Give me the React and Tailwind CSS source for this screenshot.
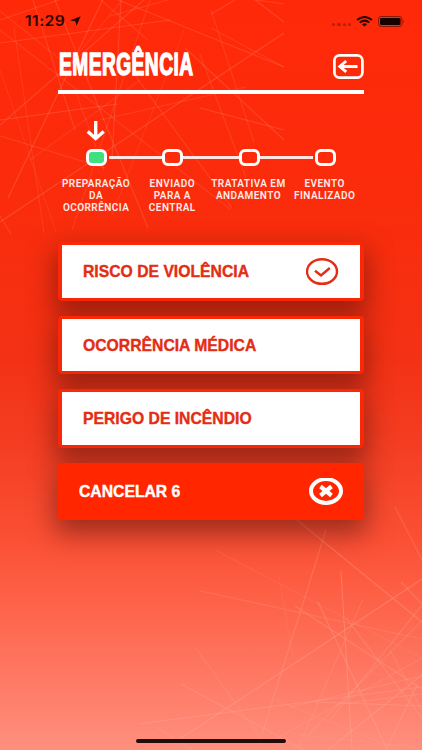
const steps = [
  { lines: ['PREPARAÇÃO', 'DA', 'OCORRÊNCIA'], active: true },
  { lines: ['ENVIADO', 'PARA A', 'CENTRAL'] },
  { lines: ['TRATATIVA EM', 'ANDAMENTO'] },
  { lines: ['EVENTO', 'FINALIZADO'] },
];

const options = [
  { label: 'RISCO DE VIOLÊNCIA', selected: true },
  { label: 'OCORRÊNCIA MÉDICA' },
  { label: 'PERIGO DE INCÊNDIO' },
];

// x1, y1, x2, y2, opacity
const scratches = [
  [0, 43, 170, 20, 0.2], [0, 125, 160, -14, 0.2], [0, 11, 66, 64, 0.13],
  [33, 0, 75, 130, 0.18], [55, 0, 148, 228, 0.2], [121, 0, 112, 160, 0.2],
  [105, -5, 8, 198, 0.22], [0, 120, 118, 104, 0.22], [0, 136, 105, 168, 0.18],
  [0, 222, 284, 33, 0.22], [96, -4, 148, 40, 0.15], [118, 0, 284, 67, 0.18],
  [211, 10, 254, 142, 0.15], [211, 14, 235, 0, 0.2], [250, -4, 284, 22, 0.2],
  [256, 0, 284, 4, 0.18], [100, 120, 246, 87, 0.16], [185, 48, 284, 140, 0.2],
  [200, 108, 284, 130, 0.2], [200, 54, 246, 178, 0.16], [120, 55, 232, 208, 0.18],
  [0, 30, 230, 209, 0.14], [14, 28, 44, 233, 0.13], [150, 0, 72, 230, 0.14],
  [0, 20, 88, -10, 0.18], [110, 16, 211, -12, 0.16], [75, 90, 104, 170, 0.13],
  [211, 28, 284, 67, 0.15], [60, 76, 122, 0, 0.13], [0, 216, 11, 234, 0.18],
  [0, 70, 56, 232, 0.1], [30, 160, 140, 80, 0.12], [184, 30, 112, 215, 0.1],
  [297, 520, 422, 622, 0.24], [326, 530, 262, 734, 0.2], [395, 507, 422, 560, 0.18],
  [341, 571, 352, 750, 0.26], [318, 602, 386, 747, 0.24], [295, 606, 422, 689, 0.22],
  [200, 591, 422, 639, 0.15], [215, 550, 422, 658, 0.1], [180, 739, 280, 673, 0.24],
  [280, 673, 422, 579, 0.24],
  [138, 724, 422, 687, 0.22], [181, 684, 304, 750, 0.22], [195, 647, 262, 740, 0.15],
  [346, 618, 422, 718, 0.22], [363, 599, 298, 748, 0.15], [422, 605, 330, 720, 0.2],
  [422, 621, 308, 735, 0.16], [422, 658, 270, 742, 0.15], [422, 675, 328, 750, 0.24],
  [417, 685, 386, 750, 0.24], [290, 707, 422, 676, 0.2], [315, 702, 422, 706, 0.24],
  [300, 735, 422, 748, 0.14], [275, 700, 400, 750, 0.12], [401, 582, 422, 604, 0.2],
  [340, 704, 422, 694, 0.22], [279, 577, 293, 658, 0.08], [390, 650, 422, 710, 0.16],
  [158, 728, 192, 750, 0.16],
];

function Background() {
  return (
    <svg className="absolute inset-0 -z-10" width="422" height="750" viewBox="0 0 422 750">
      {scratches.map(([x1, y1, x2, y2, opacity], i) => (
        <line key={i} x1={x1} y1={y1} x2={x2} y2={y2} stroke="#ffb09b" strokeOpacity={y1 > 400 ? opacity * 1.3 : opacity} strokeWidth="1.1" />
      ))}
    </svg>
  );
}

function StatusBar() {
  return (
    <div className="flex h-[42px] items-center justify-between pl-[25px] pr-[17px] text-[#2b0500]">
      <div className="flex items-center gap-[5px]">
        <span className="w-[40px] origin-left scale-x-[1.12] whitespace-nowrap font-['Inter',sans-serif] text-[14px] font-semibold leading-none tracking-[0.4px]">11:29</span>
        <svg width="11" height="10" viewBox="0 0 11 10" fill="currentColor">
          <path d="M10.7 0.2 6.5 9.7 5.4 5.2 0.1 4.4Z" />
        </svg>
      </div>
      <div className="flex items-center">
        <div className="mr-[5px] mt-[6px] flex gap-[2px]">
          {[0, 1, 2, 3].map((i) => (
            <span key={i} className="h-[3px] w-[3.2px] rounded-full bg-[#b81f09]" />
          ))}
        </div>
        <svg className="mr-[5px]" width="17" height="11" viewBox="0 0 17 11" fill="none" stroke="currentColor" strokeWidth="2">
          <path d="M1 4Q8.5-2 16 4" />
          <path d="M3.7 6.5Q8.5 2.8 13.3 6.5" />
          <path d="M6 8.2Q8.5 6.4 11 8.2L8.5 10.6Z" fill="currentColor" stroke="none" />
        </svg>
        <svg width="27" height="11" viewBox="0 0 27 11">
          <rect x="0.5" y="0.5" width="23.5" height="10" rx="2.6" fill="none" stroke="#8e1705" />
          <rect x="2" y="2" width="20.5" height="7" rx="1.2" fill="#180200" />
          <path d="M25.2 3.8Q26.8 5.5 25.2 7.2Z" fill="#8e1705" />
        </svg>
      </div>
    </div>
  );
}

function Header() {
  return (
    <header className="flex h-[52px] items-start justify-between border-b-4 border-white pt-[6px]">
      <h1 className="ml-[0.5px] w-[135px] origin-left scale-x-[0.617] whitespace-nowrap font-['Liberation_Sans_Narrow','Liberation_Sans',sans-serif] text-[31px] font-bold leading-[33px] tracking-[0.8px] text-white [-webkit-text-stroke:1.5px_white]">
        EMERGÊNCIA
      </h1>
      <button aria-label="Voltar" className="mt-[6px]">
        <svg width="31" height="25" viewBox="0 0 31 25" fill="none" stroke="#fff" strokeWidth="2.7">
          <rect x="1.4" y="1.4" width="28" height="22.2" rx="5" />
          <path d="M24.5 12.5H7M13.2 7 6.8 12.5l6.4 5.3" strokeWidth="2.9" />
        </svg>
      </button>
    </header>
  );
}

function Stepper() {
  return (
    <div className="-mx-[1px] mt-[26px] h-[122px]">
      <svg className="ml-[28px]" width="20" height="21" viewBox="0 0 20 21" fill="none" stroke="#fff" strokeWidth="3.4">
        <path d="M10.7 1V19M2.7 11.5l8 7 8-7" />
      </svg>
      <div className="mt-[8px] flex items-center pl-[29px]">
        {steps.map((step, i) => (
          <div key={i} className="flex items-center">
            {i > 0 && (
              <span className={`h-[2.5px] bg-[#ffe6e2] ${i === 1 ? 'ml-[2px] w-[53px]' : i === 3 ? 'mr-[2px] w-[53px]' : 'w-[55.5px]'}`} />
            )}
            <span className={`h-[17px] w-[21px] rounded-[6px] border-[3px] border-white ${step.active ? 'bg-[#42df80]' : ''}`} />
          </div>
        ))}
      </div>
      <div className="ml-[1px] mt-[12px] flex w-[306px]">
        {steps.map((step, i) => (
          <div key={i} className="flex w-[76.2px] shrink-0 flex-col items-center whitespace-nowrap font-['Roboto',sans-serif] text-[10px] font-semibold leading-[12px] tracking-[0.45px] text-[#ffebe7]">
            {step.lines.map((line) => (
              <span key={line}>{line}</span>
            ))}
          </div>
        ))}
      </div>
    </div>
  );
}

function CheckIcon() {
  return (
    <svg width="33" height="28" viewBox="0 0 33 28" fill="none" stroke="#e32d14">
      <ellipse cx="16" cy="13.5" rx="15" ry="12.3" strokeWidth="2.4" />
      <path d="M9 12.7 15 17.5 23.8 10" strokeWidth="2.4" />
    </svg>
  );
}

function CloseIcon() {
  return (
    <svg width="35" height="28" viewBox="0 0 35 28" fill="none" stroke="#fff">
      <ellipse cx="17" cy="13" rx="15" ry="11.9" strokeWidth="4" />
      <path d="M11.5 8.5 22.5 17.5M22.5 8.5 11.5 17.5" strokeWidth="4.2" />
    </svg>
  );
}

function OptionButton({ label, selected }) {
  return (
    <button className="flex h-[58.5px] w-full items-center justify-between rounded-[4px] border-x-4 border-y-[3px] border-[#fb2706] bg-white px-[21px] pt-[1px] shadow-[0_11px_26px_3px_rgba(70,15,10,0.5)]">
      <span className="origin-left scale-x-[0.925] whitespace-nowrap text-[17px] font-bold text-[#e32d14] [-webkit-text-stroke:0.4px_#e32d14]">{label}</span>
      {selected && <CheckIcon />}
    </button>
  );
}

export default function App() {
  return (
    <main className="relative isolate flex h-[750px] w-[422px] flex-col overflow-hidden bg-[linear-gradient(#ff2908_0%,#fa2c0c_28%,#f33215_48%,#f33c21_58%,#fb5034_72%,#fd5d42_78%,#ff8f7e_100%)] font-['Liberation_Sans',Arial,sans-serif]">
      <Background />
      <StatusBar />
      <div className="w-[306px] self-center">
        <Header />
        <Stepper />
        <div className="flex flex-col gap-[15px]">
          {options.map((option) => (
            <OptionButton key={option.label} {...option} />
          ))}
          <button className="flex h-[57px] w-full items-center justify-between rounded-[4px] bg-[#ff2600] pl-[21px] pr-[20px] pt-[1px] shadow-[0_11px_26px_3px_rgba(70,15,10,0.5)]">
            <span className="origin-left scale-x-[0.925] whitespace-nowrap text-[17px] font-bold text-white [-webkit-text-stroke:0.4px_white]">CANCELAR 6</span>
            <CloseIcon />
          </button>
        </div>
      </div>
      <div className="mb-[7px] mt-auto h-[4px] w-[150px] self-center rounded-full bg-[#210c09]" />
    </main>
  );
}
